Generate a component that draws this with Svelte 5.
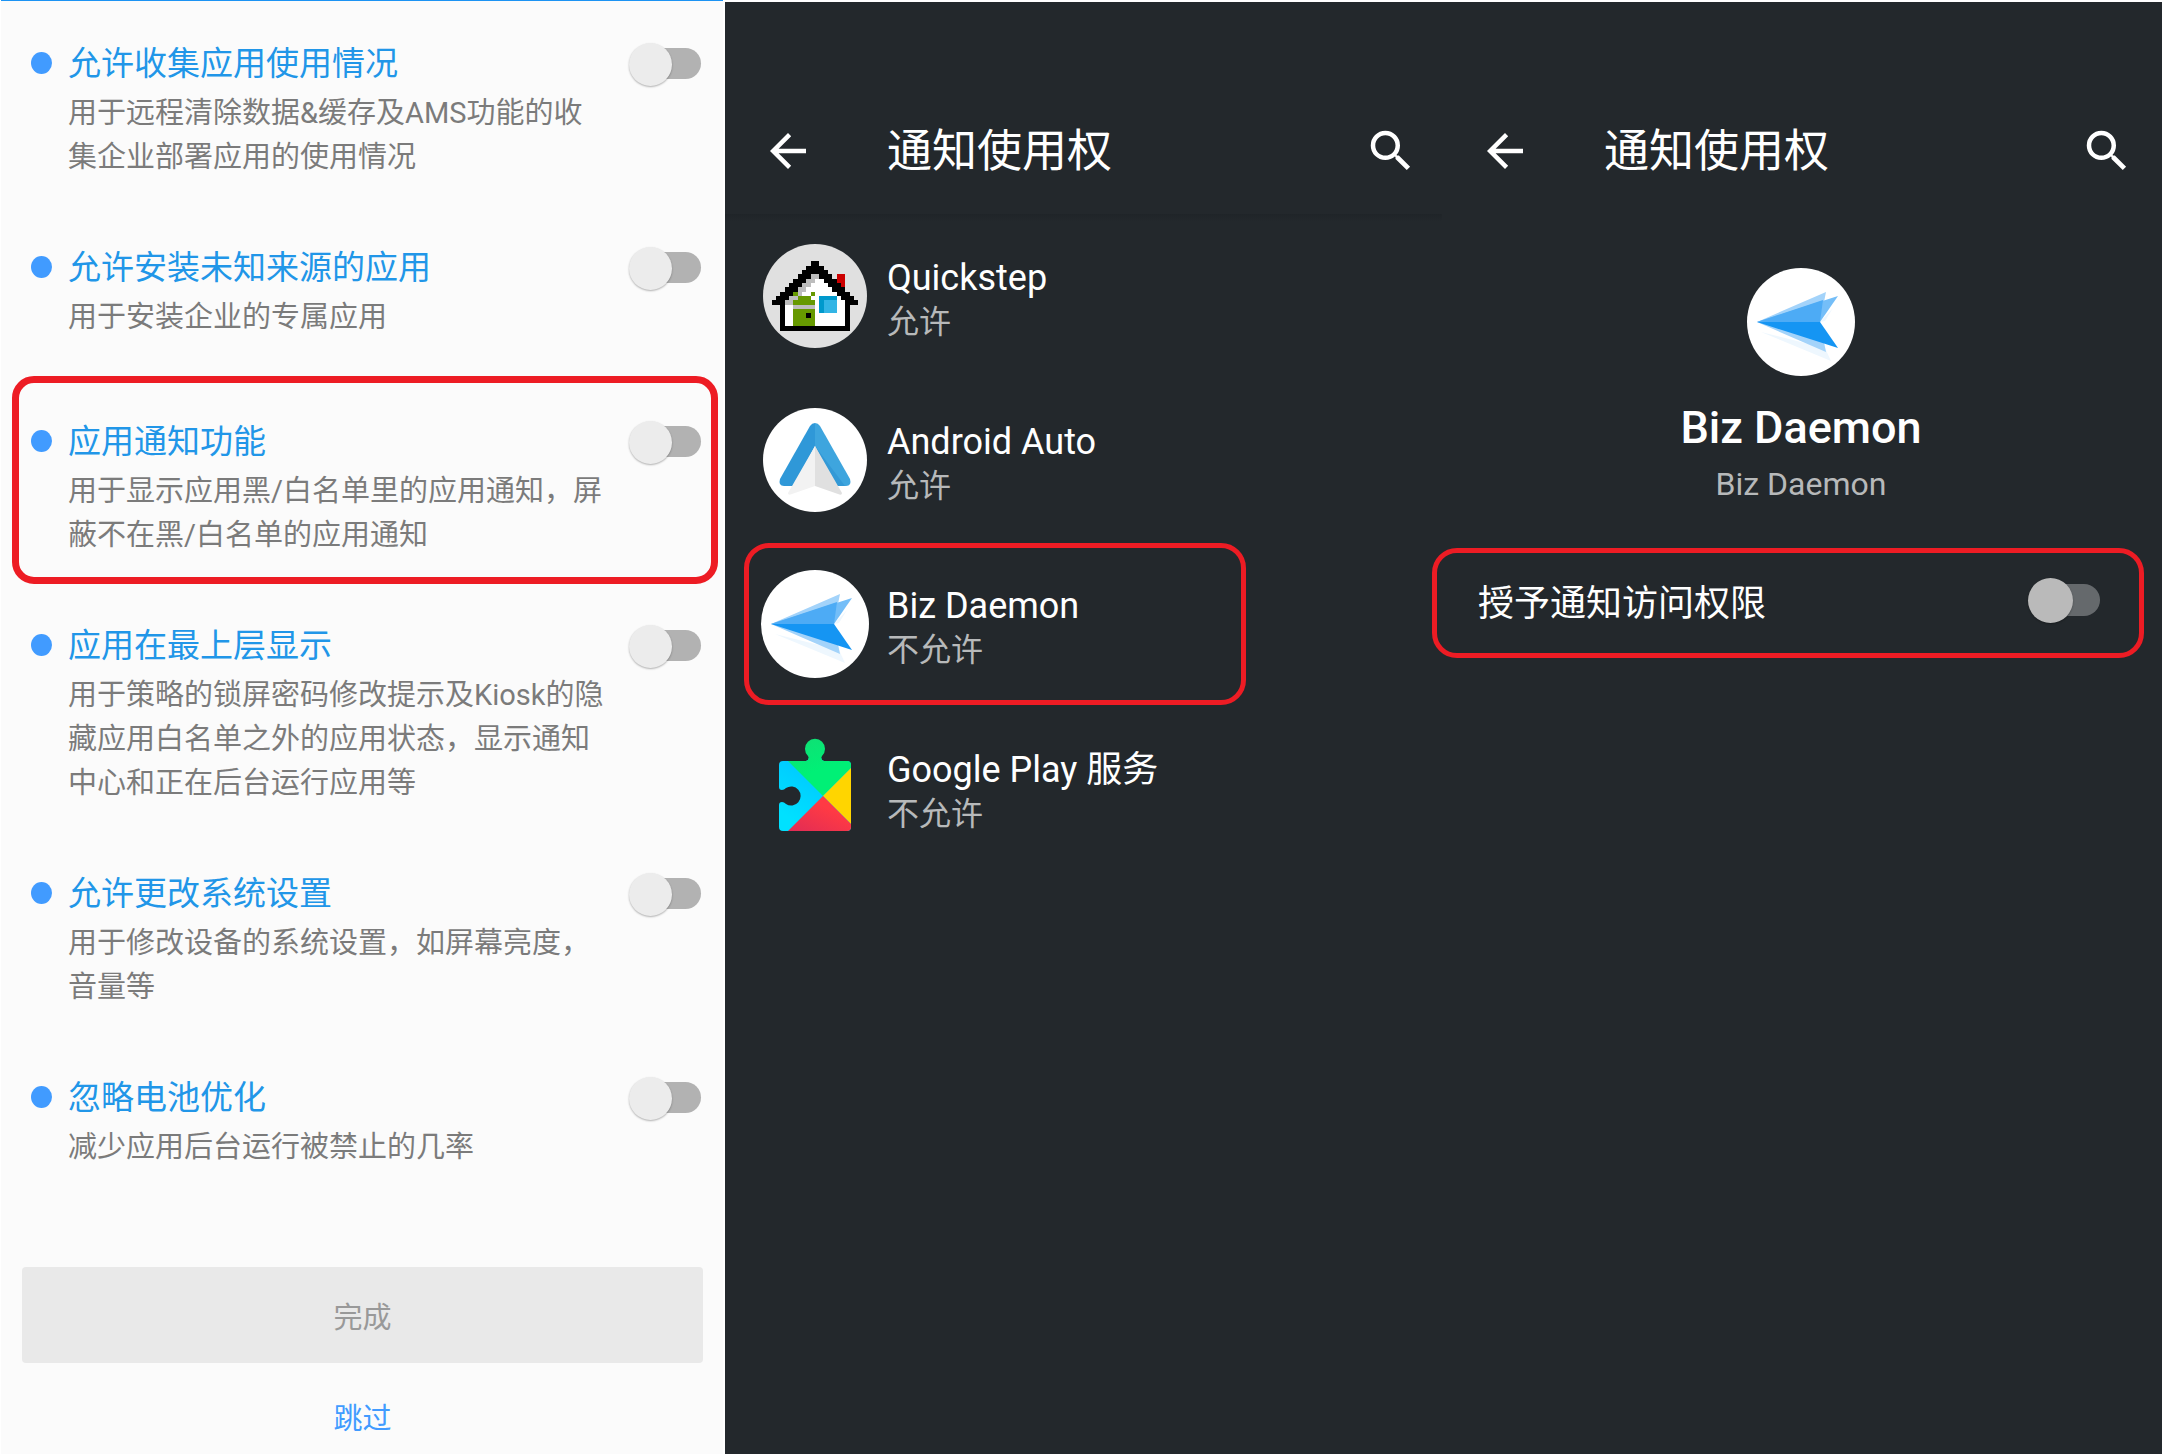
<script>
  const permissions = [
    { title: '允许收集应用使用情况', desc: '用于远程清除数据&缓存及AMS功能的收集企业部署应用的使用情况' },
    { title: '允许安装未知来源的应用', desc: '用于安装企业的专属应用' },
    { title: '应用通知功能', desc: '用于显示应用黑/白名单里的应用通知，屏蔽不在黑/白名单的应用通知', marked: true },
    { title: '应用在最上层显示', desc: '用于策略的锁屏密码修改提示及Kiosk的隐藏应用白名单之外的应用状态，显示通知中心和正在后台运行应用等' },
    { title: '允许更改系统设置', desc: '用于修改设备的系统设置，如屏幕亮度，音量等' },
    { title: '忽略电池优化', desc: '减少应用后台运行被禁止的几率' }
  ];

  const apps = [
    { name: 'Quickstep', status: '允许', icon: 'house' },
    { name: 'Android Auto', status: '允许', icon: 'auto' },
    { name: 'Biz Daemon', status: '不允许', icon: 'biz', marked: true },
    { name: 'Google Play 服务', status: '不允许', icon: 'play' }
  ];

  const roofRows = [5, 6, 7, 8, 9, 10, 11, 12];
  const shadeRows = [6, 7, 8, 9, 10, 11, 12, 13];
</script>

{#snippet bar()}
  <header class="bar">
    <button class="icon-btn" aria-label="返回">
      <svg viewBox="0 0 24 24"><path fill="#fff" d="M20 11H7.83l5.59-5.59L12 4l-8 8 8 8 1.41-1.41L7.83 13H20v-2z" /></svg>
    </button>
    <h1>通知使用权</h1>
    <button class="icon-btn" aria-label="搜索">
      <svg viewBox="0 0 24 24"><path fill="#fff" d="M15.5 14h-.79l-.28-.27A6.47 6.47 0 0 0 16 9.5 6.5 6.5 0 1 0 9.5 16c1.61 0 3.09-.59 4.23-1.57l.27.28v.79l5 4.99L20.49 19l-4.99-5zm-6 0C7.01 14 5 11.99 5 9.5S7.01 5 9.5 5 14 7.01 14 9.5 11.99 14 9.5 14z" /></svg>
    </button>
  </header>
{/snippet}

{#snippet bizIcon()}
  <svg class="app-icon" viewBox="0 0 108 108" aria-hidden="true">
    <circle cx="54" cy="54" r="54" fill="#fff" />
    <path d="M14 64 L84 93 L78 80 Z" fill="#eef7fe" />
    <path d="M73 54 L86 40 L78 53 Z" fill="#eef7fe" />
    <path d="M10 54 L79 24 L73 54 L79 84 Z" fill="#a3d3fa" />
    <path d="M10 54 L91 28 L73 54 Z" fill="#74bef8" />
    <path d="M10 54 L76 32 L73 54 Z" fill="#4dabf5" />
    <path d="M10 54 H73 L91 80 Z" fill="#1595f3" />
  </svg>
{/snippet}

{#snippet appIcon(kind)}
  {#if kind === 'house'}
    <svg class="app-icon" viewBox="-0.46 -0.46 24.92 24.92" shape-rendering="crispEdges" aria-hidden="true">
      <circle cx="12" cy="12" r="12" fill="#e0e0e0" shape-rendering="auto" />
      <rect x="17" y="7" width="2" height="3" fill="#c00" />
      <path d="M12 5 L19 12 V19 H5 V12 Z" fill="#fff" />
      {#each shadeRows as r}
        <rect x={18 - r} y={r} width="2" height="1" fill="#bdbdbd" />
      {/each}
      <rect x="11" y="4" width="2" height="1" />
      {#each roofRows as r}
        <rect x={15 - r} y={r} width="3" height="1" />
        <rect x={6 + r} y={r} width="3" height="1" />
      {/each}
      <path d="M2 13h3v6h14v-6h3v1h-2v6H4v-6H2z" />
      <path d="M7 11h1v1h3v-1h1v1h-1v1h1v6H7v-6h1v-1H7z" fill="#690" />
      <rect x="7" y="14" width="5" height="1" fill="#bdbdbd" />
      <rect x="10" y="16" width="1" height="1" />
      <rect x="13" y="12" width="4" height="4" fill="#09c" />
      <rect x="14" y="13" width="3" height="3" fill="#33b5e5" />
    </svg>
  {:else if kind === 'auto'}
    <svg class="app-icon" viewBox="-2 -2 108 108" aria-hidden="true">
      <circle cx="52" cy="52" r="52" fill="#fff" />
      <path d="M52 15 Q49 15 47 18 L17 71 Q15 78 21 78 H31 L52 38 Z" fill="#2f98d8" />
      <path d="M52 15 Q55 15 57 18 L87 71 Q89 78 83 78 H73 L52 38 Z" fill="#3ea5de" />
      <path d="M52 38 L82 78 H73 Z" fill="#3399d6" />
      <path d="M52 38 L25 85 Q25 88 29 86 L52 78 Z" fill="#f2f2f2" />
      <path d="M52 38 L79 85 Q79 88 75 86 L52 78 Z" fill="#e0e0e0" />
    </svg>
  {:else if kind === 'biz'}
    {@render bizIcon()}
  {:else}
    <svg class="app-icon" viewBox="0 -4 108 108" aria-hidden="true">
      <defs>
        <linearGradient id="play-blue" x1="0" y1="1" x2="0.6" y2="0">
          <stop offset="0.2" stop-color="#00e1ff" /><stop offset="1" stop-color="#00c3ff" />
        </linearGradient>
        <linearGradient id="play-red" x1="0" y1="1" x2="0.6" y2="0.3">
          <stop offset="0" stop-color="#df2b56" /><stop offset="1" stop-color="#ff3a44" />
        </linearGradient>
        <linearGradient id="play-green" x1="0.3" y1="0" x2="0.5" y2="0.6">
          <stop offset="0" stop-color="#11de74" /><stop offset="1" stop-color="#00f076" />
        </linearGradient>
        <clipPath id="play-shape">
          <path d="M22 23 H45 Q49 22 47 18 A10 10 0 1 1 61 18 Q59 22 63 23 H86 Q90 23 90 27 V89 Q90 93 86 93 H22 Q18 93 18 89 V67 Q18 64 21 64 Q23 64 25 66 A9.500 9.500 0 1 0 25 50 Q23 52 21 52 Q18 52 18 49 V27 Q18 23 22 23 Z" />
        </clipPath>
      </defs>
      <g clip-path="url(#play-shape)">
        <rect x="18" y="20" width="72" height="74" fill="url(#play-blue)" />
        <path d="M27 23 L20 -4 H90 V30 L62 58 Z" fill="url(#play-green)" />
        <path d="M90 30 V86 L62 58 Z" fill="#ffd500" />
        <path d="M62 58 L90 86 V94 H26 Z" fill="url(#play-red)" />
      </g>
    </svg>
  {/if}
{/snippet}

<main class="screens">
  <section class="setup">
    <ul class="perms">
      {#each permissions as p, i}
        <li class="perm" class:marked={p.marked}>
          <span class="dot"></span>
          <div class="perm-text">
            <label class="perm-title" for="perm-{i}">{p.title}</label>
            <p>{p.desc}</p>
          </div>
          <input id="perm-{i}" class="switch" type="checkbox" role="switch" />
        </li>
      {/each}
    </ul>
    <button class="done" disabled>完成</button>
    <a class="skip" href="#skip">跳过</a>
  </section>

  <section class="dark list-screen">
    {@render bar()}
    <ul class="apps">
      {#each apps as app}
        <li class="app" class:marked={app.marked}>
          {@render appIcon(app.icon)}
          <div class="app-text">
            <span class="app-name">{app.name}</span>
            <span class="app-status">{app.status}</span>
          </div>
        </li>
      {/each}
    </ul>
  </section>

  <section class="dark detail-screen">
    {@render bar()}
    <div class="profile">
      {@render bizIcon()}
      <h2>Biz Daemon</h2>
      <p>Biz Daemon</p>
    </div>
    <div class="grant marked">
      <label for="grant">授予通知访问权限</label>
      <input id="grant" class="switch" type="checkbox" role="switch" />
    </div>
  </section>
</main>

<style>
  :global(body) {
    margin: 0;
    background: #fff;
  }
  .screens {
    display: grid;
    grid-template-columns: 725fr 717fr 720fr;
    min-height: 100vh;
    font-family: Roboto, 'Noto Sans CJK SC', sans-serif;
  }
  ul {
    list-style: none;
    margin: 0;
    padding: 0;
  }
  h1, h2, p {
    margin: 0;
    font-weight: 400;
  }
  button {
    border: 0;
    padding: 0;
    background: none;
    font-family: inherit;
  }
  .marked {
    position: relative;
  }
  .marked::after {
    content: '';
    position: absolute;
    border: 5px solid #ed1c24;
    border-radius: 25px;
    pointer-events: none;
  }

  .setup {
    box-sizing: border-box;
    display: flex;
    flex-direction: column;
    margin: 0 2px 0 1px;
    padding: 38px 20px 4px 21px;
    border-top: 1px solid #1c93f3;
    background: #fbfbfb;
  }
  .perms {
    display: flex;
    flex-direction: column;
    gap: 64px;
  }
  .perm {
    display: grid;
    grid-template-columns: 21px minmax(0, 1fr) 72px;
    column-gap: 16px;
    min-height: 110px;
    padding: 0 2px 0 9px;
    align-items: start;
  }
  .perm.marked::after {
    inset: -41px -15px -27px -10px;
    border-width: 7px;
    border-radius: 22px;
  }
  .dot {
    height: 22px;
    margin-top: 13px;
    border-radius: 50%;
    background: #419bff;
  }
  .perm-text {
    max-width: 538px;
  }
  .perm-title {
    display: block;
    margin-bottom: 2px;
    font-size: 33px;
    line-height: 50px;
    color: #2196e8;
  }
  .perm-text p {
    font-size: 29px;
    line-height: 44px;
    color: #7b7b7b;
  }

  .switch {
    appearance: none;
    position: relative;
    display: flex;
    align-items: center;
    width: 72px;
    height: 44px;
    margin: 3px 0 0;
  }
  .switch::before {
    content: '';
    position: absolute;
    inset: 6px 0 7px 10px;
    border-radius: 16px;
    background: #b2b2b2;
  }
  .switch::after {
    content: '';
    position: relative;
    width: 43px;
    height: 43px;
    border-radius: 50%;
    background: #ececec;
    box-shadow: 0 1px 2px rgba(0, 0, 0, 0.3);
  }

  .done {
    height: 96px;
    margin-top: 84px;
    border-radius: 4px;
    background: #e9e9e9;
    color: #999;
    font-size: 29px;
  }
  .skip {
    align-self: center;
    margin-top: 34px;
    font-size: 29px;
    line-height: 44px;
    color: #419bff;
    text-decoration: none;
  }

  .dark {
    margin-top: 2px;
    background: #23282c;
    color: #fff;
  }
  .bar {
    display: flex;
    align-items: center;
    box-sizing: border-box;
    height: 212px;
    padding: 86px 24px 0 36px;
  }
  .detail-screen .bar {
    padding-right: 28px;
  }
  .icon-btn,
  .icon-btn svg {
    display: block;
    width: 54px;
    height: 54px;
  }
  h1 {
    flex: 1;
    padding: 2px 0 0 72px;
    font-size: 45px;
    line-height: 60px;
  }
  .apps {
    background: linear-gradient(#1f2428, #23282c 8px);
  }
  .app {
    display: flex;
    align-items: center;
    gap: 18px;
    height: 164px;
    padding-left: 36px;
  }
  .app.marked::after {
    inset: 1px 196px 1px 19px;
  }
  .app-icon {
    display: block;
    width: 108px;
    height: 108px;
    flex: none;
  }
  .app-text {
    display: grid;
    padding-top: 4px;
  }
  .app-name {
    font-size: 36px;
    line-height: 48px;
  }
  .app-status {
    font-size: 32px;
    line-height: 40px;
    color: #b7b9ba;
  }

  .profile {
    display: flex;
    flex-direction: column;
    align-items: center;
    padding: 54px 2px 0 0;
  }
  h2 {
    margin-top: 22px;
    font-size: 45px;
    font-weight: 500;
    line-height: 60px;
  }
  .profile p {
    margin-top: 6px;
    font-size: 32px;
    line-height: 40px;
    color: #b7b9ba;
  }
  .grant {
    box-sizing: border-box;
    display: flex;
    align-items: center;
    justify-content: space-between;
    height: 110px;
    margin-top: 44px;
    padding: 0 62px 6px 36px;
    font-size: 36px;
  }
  .grant.marked::after {
    inset: 0 18px 0 -10px;
  }
  .grant .switch {
    margin: 0;
    height: 45px;
  }
  .grant .switch::before {
    background: #65696c;
  }
  .grant .switch::after {
    width: 45px;
    height: 45px;
    background: #bababa;
  }
</style>
